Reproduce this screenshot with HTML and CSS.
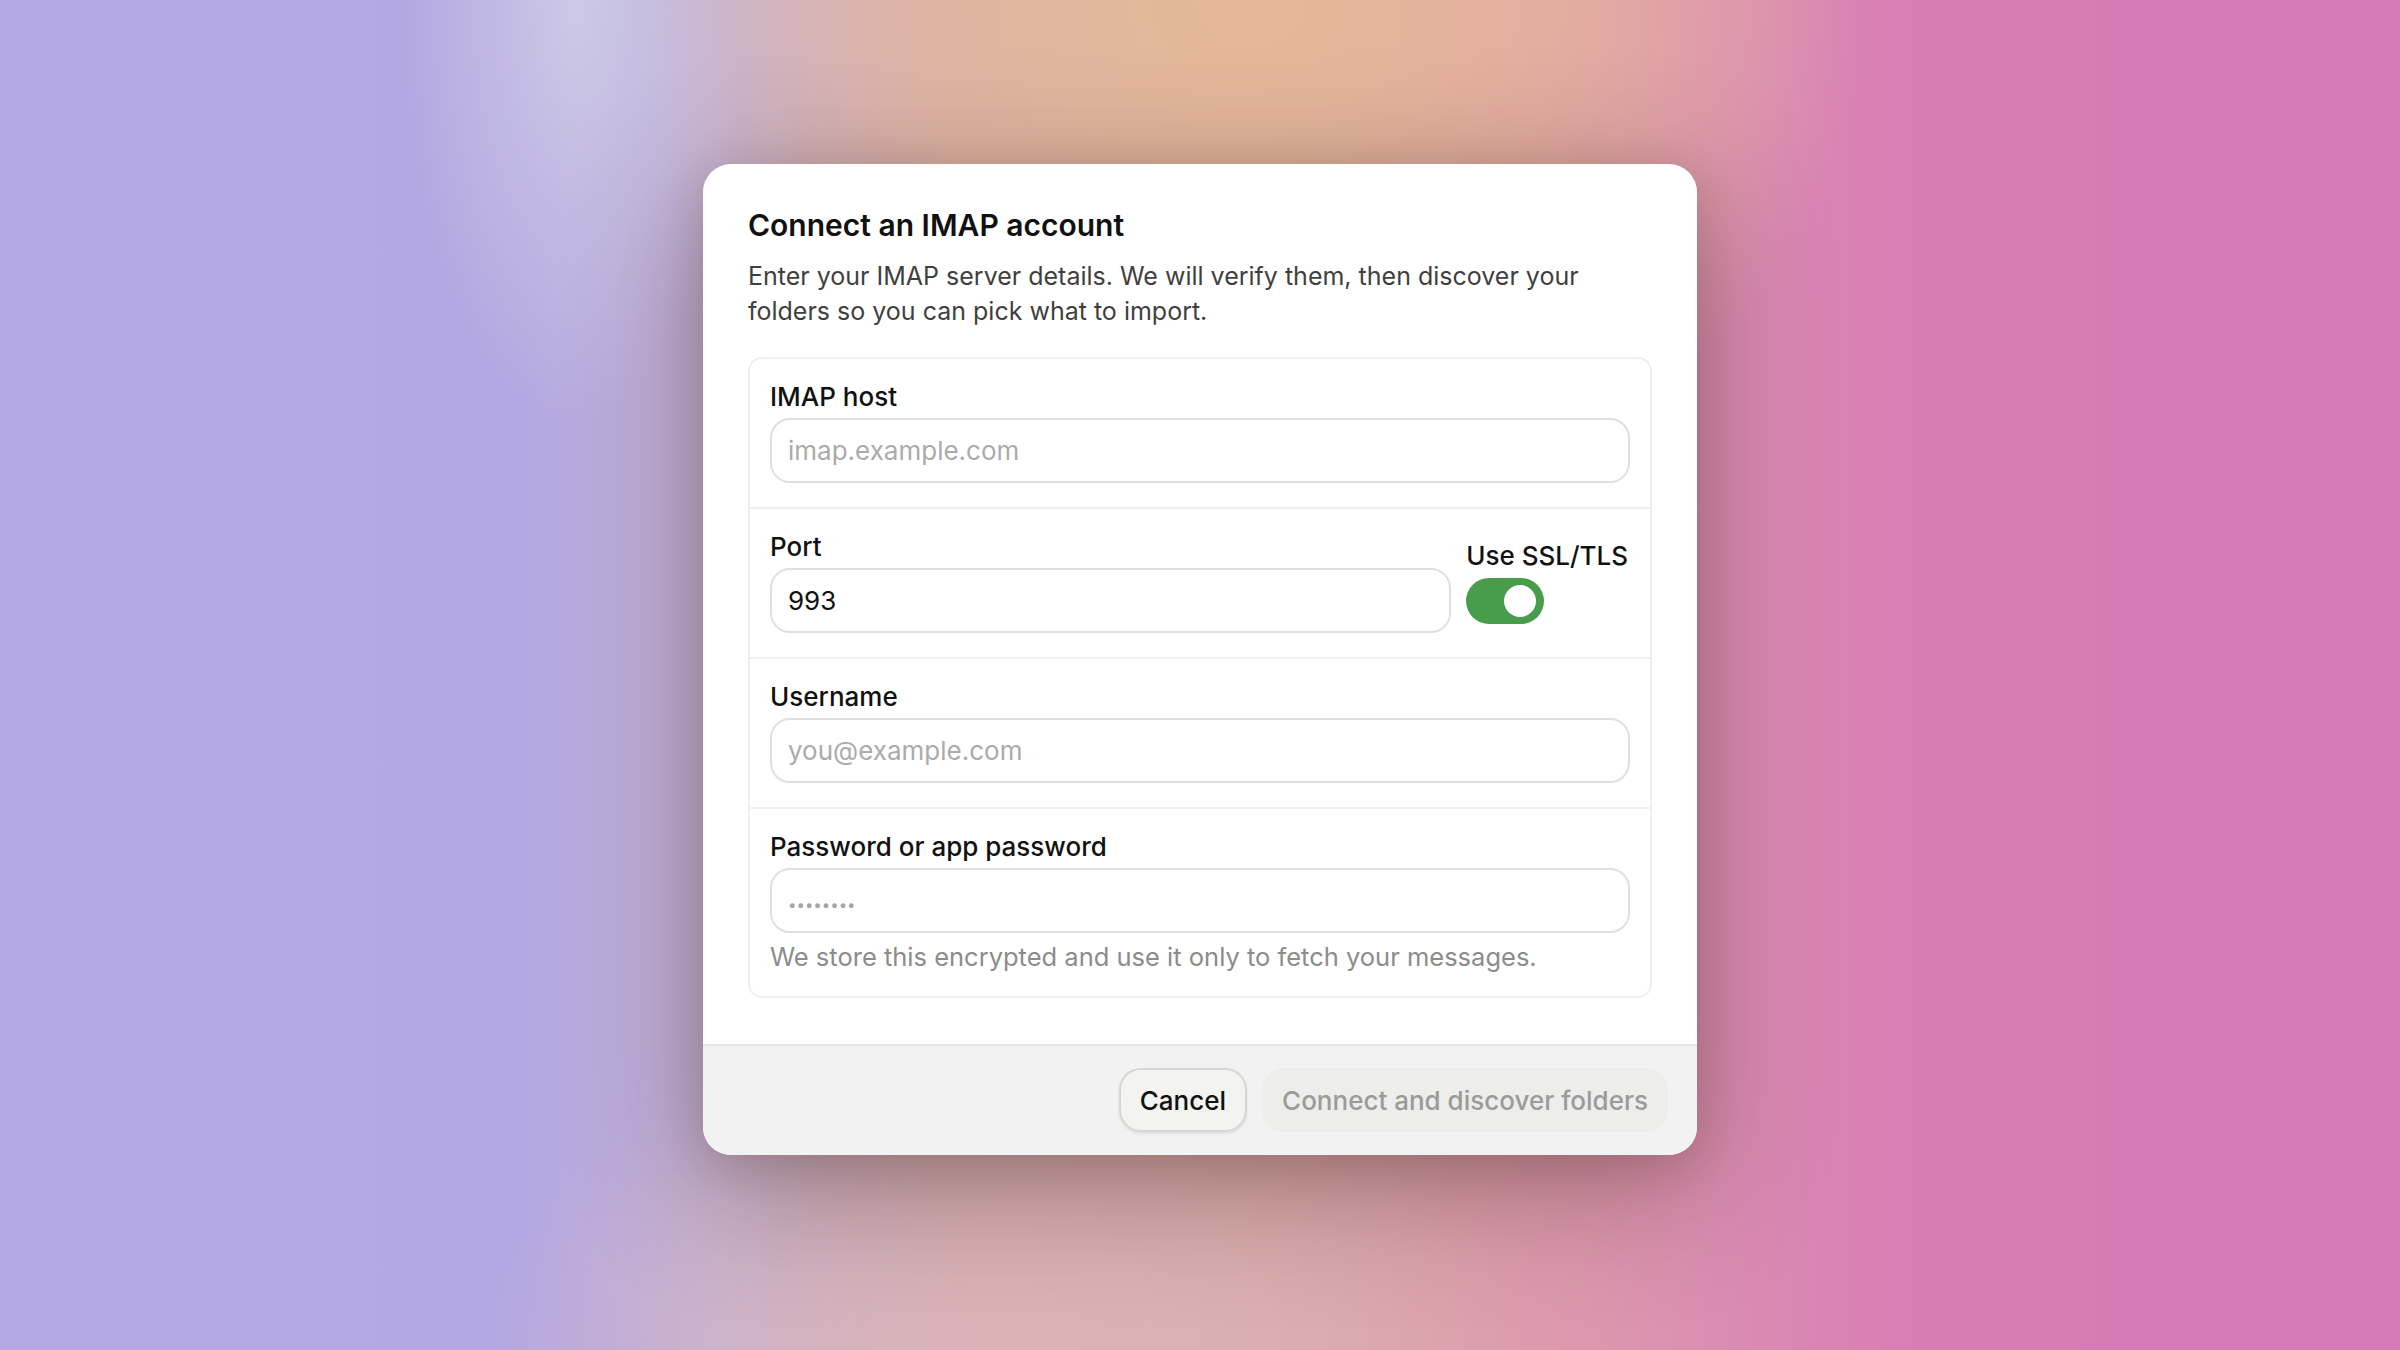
FILE: index.html
```html
<!DOCTYPE html>
<html lang="en">

<head>
    <meta charset="UTF-8">
    <meta name="viewport" content="width=device-width, initial-scale=1.0">
    <title>Connect an IMAP account</title>
    <link rel="stylesheet" href="styles.css">
</head>

<body>
    <div class="dialog">
        <div class="dialog-body">
            <h2 class="dialog-title">Connect an IMAP account</h2>
            <p class="dialog-desc">Enter your IMAP server details. We will verify them, then discover your folders so you can pick what to import.</p>

            <form class="fields" action="" method="post">
                <div class="field-row">
                    <label class="field-label" for="host">IMAP host</label>
                    <input class="field-input" type="text" id="host" placeholder="imap.example.com">
                </div>

                <div class="field-row field-row-split">
                    <div class="field-main">
                        <label class="field-label" for="port">Port</label>
                        <input class="field-input" type="text" id="port" value="993">
                    </div>
                    <div class="field-switch">
                        <span class="field-label">Use SSL/TLS</span>
                        <span class="toggle is-on"><span class="toggle-knob"></span></span>
                    </div>
                </div>

                <div class="field-row">
                    <label class="field-label" for="user">Username</label>
                    <input class="field-input" type="text" id="user" placeholder="you@example.com">
                </div>

                <div class="field-row">
                    <label class="field-label" for="pass">Password or app password</label>
                    <input class="field-input field-password" type="password" id="pass" placeholder="••••••••">
                    <p class="field-hint">We store this encrypted and use it only to fetch your messages.</p>
                </div>
            </form>
        </div>

        <div class="dialog-footer">
            <button type="button" class="btn btn-cancel">Cancel</button>
            <button type="submit" class="btn btn-primary" disabled>Connect and discover folders</button>
        </div>
    </div>
</body>

</html>
```

FILE: styles.css
```css
/* Reset */
* {
    margin: 0;
    padding: 0;
    box-sizing: border-box;
}

/* Page with blurred backdrop */
body {
    font-family: Inter, "Noto Sans", sans-serif;
    color: #111;
    height: 100vh;
    padding-top: 164px;
    background:
        radial-gradient(ellipse 170px 420px at 24% 0%, rgba(208, 206, 230, 0.85), rgba(208, 206, 230, 0) 100%),
        radial-gradient(ellipse 620px 520px at 52% 0%, #e6b898 0%, rgba(230, 184, 152, 0.6) 55%, rgba(230, 184, 152, 0) 100%),
        radial-gradient(ellipse 520px 320px at 42% 100%, rgba(218, 180, 184, 0.9), rgba(218, 180, 184, 0) 100%),
        linear-gradient(90deg, #b6a8e2 0%, #b5a8e2 22%, #c4b2d6 30%, #d6aeb4 40%, #dcaaa8 52%, #dc98ae 66%, #d87cb6 80%, #d67ab6 100%);
}

/* Dialog */
.dialog {
    width: 994px;
    margin: 0 auto;
    background-color: #ffffff;
    border-radius: 28px;
    overflow: hidden;
    box-shadow: 0 30px 130px rgba(70, 40, 30, 0.42), 0 10px 40px rgba(70, 40, 40, 0.15);
}

.dialog-body {
    padding: 42px 45px 46px;
}

.dialog-title {
    font-size: 30px;
    line-height: 39px;
    font-weight: 600;
    color: #111;
}

.dialog-desc {
    margin-top: 14px;
    font-size: 25px;
    line-height: 35px;
    color: #3f3f3f;
}

/* Grouped fields */
.fields {
    margin-top: 28px;
    border: 2px solid #efefef;
    border-radius: 14px;
}

.field-row {
    padding: 23px 20px 24px;
    border-top: 2px solid #f0f0f0;
}

.field-row:first-child {
    border-top: none;
}

.field-row-split {
    display: flex;
    align-items: center;
    gap: 15px;
}

.field-main {
    flex: 1;
}

.field-label {
    display: block;
    font-size: 26px;
    line-height: 30px;
    font-weight: 500;
    color: #111;
    margin-bottom: 6px;
}

.field-input {
    display: block;
    width: 100%;
    height: 65px;
    padding: 0 16px;
    border: 2px solid #e0e0dc;
    border-radius: 20px;
    background: #fff;
    font-family: inherit;
    font-size: 26px;
    color: #111;
    outline: none;
}

.field-input::placeholder {
    color: #ababab;
}

.field-password::placeholder {
    font-size: 15px;
    color: #a4a4a4;
}

.field-hint {
    margin-top: 9px;
    font-size: 25.5px;
    line-height: 30px;
    color: #8c8c8a;
}

/* SSL switch */
.field-switch {
    display: flex;
    flex-direction: column;
    margin-right: 2px;
}

.field-switch .field-label {
    margin-bottom: 7px;
}

.toggle {
    display: flex;
    align-items: center;
    justify-content: flex-end;
    width: 78px;
    height: 46px;
    padding: 0 8px;
    border-radius: 23px;
    background-color: #dcdcdc;
}

.toggle.is-on {
    background-color: #499c4c;
}

.toggle-knob {
    width: 32px;
    height: 32px;
    border-radius: 50%;
    background-color: #fff;
}

/* Footer */
.dialog-footer {
    display: flex;
    justify-content: flex-end;
    gap: 15px;
    padding: 22px 29px 23px;
    background-color: #f2f2f2;
    border-top: 2px solid #e4e4e4;
}

.btn {
    height: 64px;
    padding: 0 19px;
    border-radius: 22px;
    font-family: inherit;
    font-size: 26px;
    font-weight: 500;
    cursor: pointer;
}

.btn-cancel {
    background-color: #f3f3f1;
    border: 2px solid #d6d6d2;
    color: #111;
    box-shadow: 0 2px 3px rgba(0, 0, 0, 0.08);
}

.btn-primary {
    padding: 0 20px;
    background-color: #ededeb;
    border: none;
    color: #9b9b99;
    cursor: default;
}
```
